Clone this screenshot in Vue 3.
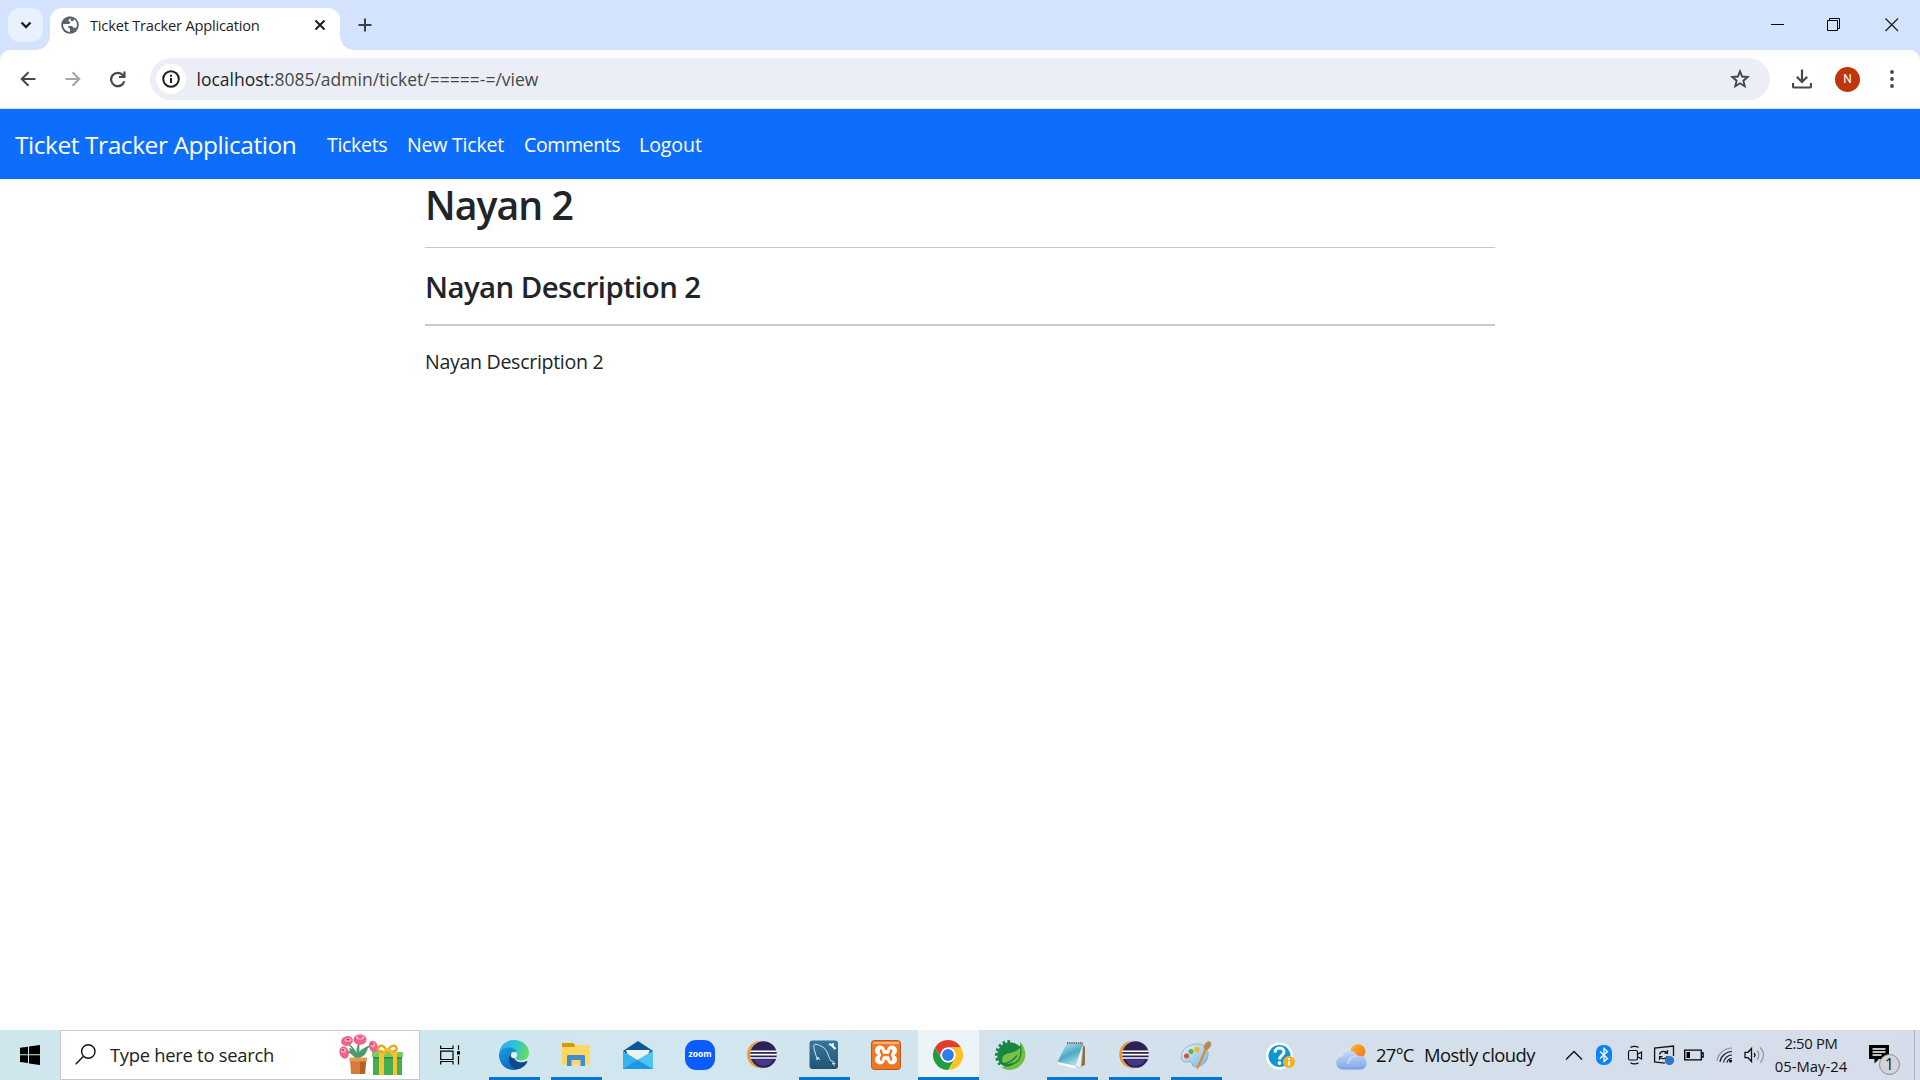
<script setup>
const navLinks = [
  { label: 'Tickets', cls: 'n1' },
  { label: 'New Ticket', cls: 'n2' },
  { label: 'Comments', cls: 'n3' },
  { label: 'Logout', cls: 'n4' },
]
</script>

<template>
  <div class="screen">
    <div class="chrome">
      <header class="tabstrip">
        <div class="tab-search">
          <svg width="12" height="8" viewBox="0 0 12 8"><path d="M1.500 1.500 6 6l4.500-4.500" fill="none" stroke="#1f1f1f" stroke-width="2.400" /></svg>
        </div>
        <div class="tab">
          <svg width="18" height="18" viewBox="0 0 18 18">
            <circle cx="9" cy="9" r="8.800" fill="#5f6368" />
            <path d="M9.800 2.200c-1 .7-2.300 1-2.300 2.400 0 .9.9 1.200 1.800 1.200 0 1.700-.6 2-2 2.200H2.200c-.4 3 1 5.200 2.800 6.400 1.200.9 2.700 1.400 4 1.400v-2.500c0-1-.8-1.400-1.600-1.500V10h3.500c.8 0 .8 1.700 2 1.700h2.500C16.600 8 15.800 5 13 3.300c-.2 1.400-.9 1.900-2 2C9.900 5.400 9.200 4 9.800 2.200Z" fill="#fff" />
          </svg>
          <span class="tab-title">Ticket Tracker Application</span>
          <svg width="12" height="12" viewBox="0 0 12 12"><path d="m1.500 1.500 9 9m0-9-9 9" stroke="#1f1f1f" stroke-width="2" /></svg>
        </div>
        <svg class="plus" width="14" height="14" viewBox="0 0 14 14"><path d="M7 .5v13M.5 7h13" stroke="#3c4043" stroke-width="2" /></svg>
        <div class="win-controls">
          <svg width="14" height="14" viewBox="0 0 14 14"><path d="M0 6.500h13" stroke="#000" /></svg>
          <svg width="14" height="14" viewBox="0 0 14 14"><path d="M.5 2.500h10v10h-10zM2.500 2.500v-2h10v10h-2" fill="none" stroke="#000" /></svg>
          <svg class="win-close" width="14" height="14" viewBox="0 0 14 14"><path d="m.5.5 12.500 12.500m0-12.500L.5 13" stroke="#1a1a1a" stroke-width="1.200" /></svg>
        </div>
      </header>

      <div class="toolbar">
        <svg class="nav-ico" width="16" height="16" viewBox="0 0 16 16"><path d="M15.500 8H2M8.500 1.200 1.700 8l6.800 6.800" fill="none" stroke="#474747" stroke-width="2" /></svg>
        <svg class="nav-ico" width="16" height="16" viewBox="0 0 16 16"><path d="M.5 8H14M7.500 1.200 14.300 8l-6.800 6.800" fill="none" stroke="#a6a6a6" stroke-width="2" /></svg>
        <svg class="nav-ico reload" width="16" height="17" viewBox="0 0 16 17"><path d="M14.300 10.300A6.700 6.700 0 1 1 13 4.200L14.500 6" fill="none" stroke="#474747" stroke-width="2.200" /><path d="M15.500.5V7H9V4.900h4.400V.5z" fill="#474747" /></svg>
        <div class="omnibox">
          <div class="site-info">
            <svg width="18" height="18" viewBox="0 0 18 18"><circle cx="9" cy="9" r="7.800" fill="none" stroke="#1f1f1f" stroke-width="2" /><path d="M9 8v5M9 4.700v2" stroke="#1f1f1f" stroke-width="2" /></svg>
          </div>
          <span class="url"><b>localhost</b>:8085/admin/ticket/=====-=/view</span>
          <svg class="star" width="20" height="20" viewBox="0 0 20 20"><path d="m10 2.400 2.100 5.100 5.600.5-4.300 3.700 1.300 5.500L10 14.300l-4.700 2.900 1.300-5.500L2.300 8l5.600-.5z" fill="none" stroke="#474747" stroke-width="1.900" /></svg>
        </div>
        <svg class="dl" width="20" height="20" viewBox="0 0 20 20"><path d="M10 .5v12M4.800 7.800 10 13l5.200-5.200M1 14v3.300c0 .8.500 1.200 1.200 1.200h15.600c.7 0 1.200-.4 1.200-1.200V14" fill="none" stroke="#474747" stroke-width="2.200" /></svg>
        <div class="avatar">N</div>
        <svg class="dots" width="4" height="18" viewBox="0 0 4 18"><g fill="#474747"><circle cx="2" cy="2" r="1.900" /><circle cx="2" cy="9" r="1.900" /><circle cx="2" cy="16" r="1.900" /></g></svg>
      </div>
    </div>

    <nav class="navbar">
      <a class="brand">Ticket Tracker Application</a>
      <a v-for="l in navLinks" :key="l.label" class="link" :class="l.cls">{{ l.label }}</a>
    </nav>

    <main class="content">
      <h1>Nayan 2</h1>
      <hr class="thin" />
      <h3>Nayan Description 2</h3>
      <hr class="thick" />
      <p>Nayan Description 2</p>
    </main>

    <footer class="taskbar">
      <div class="start">
        <svg width="20" height="20" viewBox="0 0 20 20"><path d="M0 2.800 8 1.700v7.600H0zM9 1.500 20 0v9.300H9zM0 10.300h8v7.800l-8-1.100zM9 10.300h11V20L9 18.400z" /></svg>
      </div>
      <div class="search">
        <svg class="lens" width="21" height="21" viewBox="0 0 21 21"><circle cx="13.300" cy="7.500" r="6.700" fill="none" stroke="#111" stroke-width="1.400" /><path d="M8.500 12.300.7 20.200" stroke="#111" stroke-width="1.400" /></svg>
        <span class="search-text">Type here to search</span>
        <svg class="gift" width="65" height="42" viewBox="0 0 65 42">
          <g fill="none" stroke="#3f8f58" stroke-width="1.400"><path d="M19 24C17 16 12 12 8 9M19 24c0-8 1-13 1-18M20 24c3-8 6-10 11-12M17 24c-4-6-7-7-11-7" /></g>
          <path d="M19 24c-6-1-8-6-9-10 6 1 9 5 9 10Zm0 0c0-7 4-10 10-11-1 6-4 10-10 11ZM19 23c-2-4-2-8 0-13 2 5 2 9 0 13Z" fill="#4a9c6c" />
          <g fill="#f0618c"><ellipse cx="8" cy="7" rx="6" ry="4.800" transform="rotate(-18 8 7)" /><ellipse cx="21" cy="5.500" rx="6.500" ry="5.300" /><ellipse cx="34.500" cy="13" rx="4.300" ry="6.300" transform="rotate(-20 34 13)" /><ellipse cx="5" cy="18.500" rx="4.600" ry="6.300" transform="rotate(-15 5 18)" /></g>
          <g fill="#f9a6bd"><ellipse cx="9" cy="6" rx="3.500" ry="2" /><ellipse cx="21" cy="3.600" rx="4.200" ry="2" /><ellipse cx="34" cy="11" rx="2.300" ry="2.500" /><ellipse cx="4.500" cy="16.500" rx="2.500" ry="2.500" /></g>
          <g fill="#b92d5e"><ellipse cx="9" cy="5.600" rx="1.700" ry=".8" /><ellipse cx="21" cy="3" rx="2" ry=".8" /><circle cx="33" cy="10" r="1" /><circle cx="4" cy="16" r="1" /></g>
          <path d="M11 26h16l-1 14H12z" fill="#d67b3b" /><path d="M10.500 23.500h17.500v4H10.500z" fill="#e39a58" /><path d="M21 27.500h6L26 40h-5z" fill="#b85f25" />
          <path d="M34 21h29v20H34z" fill="#48ad50" /><path d="M33 18h31v5H33z" fill="#76cf5d" /><path d="M34 23h29v1.500H34z" fill="#2d8840" />
          <path d="M40 18h5v23h-5zM54 18h4v23h-4z" fill="#f6c52f" />
          <path d="M48 18c-9 0-12-2-7-6 3-1 6 2 7 6Zm0 0c9 0 12-2 8-6-3-1-7 2-8 6Z" fill="none" stroke="#eaa51c" stroke-width="2.400" /><path d="M46 16h5l5 8M47 16l-5 8" fill="none" stroke="#f5bf2b" stroke-width="2.400" />
        </svg>
      </div>
      <div class="taskview">
        <svg width="20" height="20" viewBox="0 0 20 20"><path d="M.7.500v3h12.300v-3M.7 19.500v-3h12.300v3M.7 6.200h12.300v8.300H.7z" fill="none" stroke="#000" stroke-width="1.200" /><path d="M18.500.3v4.500M18.500 11v8.500" stroke="#000" stroke-width="1.200" /><path d="M17 6.200h3v3.300h-3z" /></svg>
      </div>

      <!-- Edge -->
      <div class="app open">
        <svg width="32" height="32" viewBox="0 0 32 32">
          <defs>
            <linearGradient id="edgeA" x1="0" y1=".3" x2="1" y2=".5"><stop stop-color="#2aaef0" /><stop offset=".55" stop-color="#2dc5ce" /><stop offset="1" stop-color="#6ade54" /></linearGradient>
            <linearGradient id="edgeB" x1="0" y1="0" x2=".6" y2="1"><stop stop-color="#1b9de0" /><stop offset="1" stop-color="#0a68c8" /></linearGradient>
          </defs>
          <path d="M1 15C2 6 8 1 16 1s15 5.500 15 12.500c0 5-3.500 8-8 8-4 0-5.500-1.500-5.500-2.500 0-1 1.400-1.700 1.400-4.500 0-3-3-5.500-7.500-5.500C6.500 9 2.500 11 1 15Z" fill="url(#edgeA)" />
          <path d="M1 15c1.500-4.500 5-6.500 9.500-6.500 4.500 0 7.800 2 8.300 5-4-2-7.500.5-7.500 5.500 0 6.500 6 9.500 10 10-1.500 1.300-3.500 2-5.500 2C7 31 .500 24 1 15Z" fill="url(#edgeB)" />
          <path d="M13 14.500c-4.500 5-1.500 12 3 15 2 1.200 4.500 1 6.500 0 3-1.400 5.500-3.600 6.800-6.500.3-.8-.3-1.100-1-.7-4 2-9 1-11-1.800-1.500-2-2-4.500-.3-6.500-1.300-.5-3-.5-4 .5Z" fill="#114a8b" />
          <path d="M17.400 14c-1.700 2-1.600 4.300-.3 6.300.8 1.300 2 2 3.400 2.400l1-1.300c-2.800-.3-4-1.500-4-2.400 0-1 1.400-1.700 1.400-4.500z" fill="#e4f1f5" /><circle cx="15.800" cy="16.300" r="2.900" fill="#e4f1f5" />
        </svg>
      </div>
      <!-- File Explorer -->
      <div class="app open">
        <svg width="32" height="32" viewBox="0 0 32 32"><path d="M2 4h11l2 2v4H2z" fill="#d99a00" /><path d="M2 8h12l2-2h13.500v20H2z" fill="#ffd65f" /><path d="M7 27V17.500c0-1 .5-1.500 1.500-1.500h15c1 0 1.500.5 1.500 1.500V27h-4.500v-6h-9v6z" fill="#3c8fd1" /></svg>
      </div>
      <!-- Mail -->
      <div class="app">
        <svg width="32" height="32" viewBox="0 0 32 32"><path d="M1 12 16 2l15 10v5H1z" fill="#0a5797" /><path d="M4 11h24l-3 7-9 5-10-6z" fill="#f2f1ef" /><path d="M1 12v18h30V12L15.500 21z" fill="#35b3ee" /><path d="M1 30h30L15.500 21z" fill="#1f98df" /><path d="m15.500 21 15.500 9V12z" fill="#4cc5f4" /></svg>
      </div>
      <!-- Zoom -->
      <div class="app">
        <div class="zoom-ico">zoom</div>
      </div>
      <!-- Eclipse -->
      <div class="app">
        <svg width="32" height="32" viewBox="0 0 32 32"><circle cx="15" cy="15.500" r="13.800" fill="#f7941e" /><circle cx="18" cy="15.500" r="14" fill="#d4e5ed" /><circle cx="17.500" cy="15.500" r="13.300" fill="#2c2255" /><path d="M8 20.500h19a10 9 0 0 1-19 0z" fill="#473788" /><path d="M4.300 12.200h26.400M4.100 15.600h26.800M4.300 19h26.400" stroke="#fff" stroke-width="1.600" /></svg>
      </div>
      <!-- MySQL Workbench -->
      <div class="app open">
        <svg width="32" height="32" viewBox="0 0 32 32"><defs><linearGradient id="sql" x1="0" y1="0" x2="0" y2="1"><stop stop-color="#39779f" /><stop offset="1" stop-color="#215473" /></linearGradient></defs><rect x="1.500" y="1.500" width="28.500" height="28.500" rx="3" fill="url(#sql)" /><path d="M9 21c0-3-1.500-5-2-8C6 10 5 6.500 6.500 5.500c2-.8 3.500.5 5 1 4 1 6.500 4 8 7.500 1.300 3 2 5.500 3 7.500 2 .5 3.500 1.500 4.500 3l-3-.3 3 2.500M9 21l1-3 1.500 3" fill="none" stroke="#d8e8f1" stroke-width="1" /><path d="m27.500 10-4-4M21.500 4.500c1 2 3 2 4 0" stroke="#fff" stroke-width="2.200" fill="none" /></svg>
      </div>
      <!-- XAMPP -->
      <div class="app">
        <svg width="32" height="32" viewBox="0 0 32 32"><rect x="1.500" y="1.500" width="29" height="29" rx="3" fill="#f37623" stroke="#b95a1b" /><path d="M3 3h26v2H3z" fill="#f9b17b" /><g fill="#fff"><circle cx="10" cy="11.500" r="5" /><circle cx="22" cy="11.500" r="5" /><circle cx="10" cy="20.500" r="5" /><circle cx="22" cy="20.500" r="5" /><path d="M8 11h16v10H8z" /></g><path d="M11 10.500v2.300l1.500 3.200-1.500 3.200v2.300M21 10.500v2.300L19.500 16l1.500 3.200v2.300M12 16h8" fill="none" stroke="#f37623" stroke-width="2.400" /></svg>
      </div>
      <!-- Chrome -->
      <div class="app open active">
        <svg width="32" height="32" viewBox="0 0 32 32"><path d="M3 8.500a15 15 0 0 1 26 0H16a7.500 7.500 0 0 0-6.500 11.250z" fill="#e33b2e" /><path d="M29 8.500A15 15 0 0 1 16 31l6.500-11.250A7.500 7.500 0 0 0 16 8.500z" fill="#fcc31e" /><path d="M16 31A15 15 0 0 1 3 8.500l6.500 11.250a7.500 7.500 0 0 0 13 0z" fill="#249a41" /><circle cx="16" cy="16" r="7.500" fill="#fff" /><circle cx="16" cy="16" r="5.900" fill="#2f7cf0" /></svg>
      </div>
      <!-- Spring Tools -->
      <div class="app">
        <svg width="32" height="32" viewBox="0 0 32 32"><path d="M16 2.300a13.700 13.700 0 0 0-9.700 23.400" fill="none" stroke="#178640" stroke-width="2.800" stroke-dasharray="2.600 2.300" /><circle cx="16" cy="16" r="12.800" fill="#178640" /><path d="M25.500 2.500c8 7 7.500 19 .5 24.500-6 5-14 5-19 1 12 1 24-6 18.500-25.500Z" fill="#72be44" /><path d="M26.500 7c2 13-3 17-9 18-4 .7-7.500 0-9.500-1.500C6 16 11 14 17 13c5-.7 7-2 9.500-6Z" fill="#79c143" stroke="#178640" stroke-width="1.300" /><path d="M8 25c6-.5 11-3 15-8.500" fill="none" stroke="#178640" stroke-width="1.400" /></svg>
      </div>
      <!-- Notepad -->
      <div class="app open">
        <svg width="32" height="32" viewBox="0 0 32 32"><defs><linearGradient id="note" x1=".2" y1="0" x2=".7" y2="1"><stop stop-color="#b5e2ed" /><stop offset=".5" stop-color="#4daac4" /><stop offset="1" stop-color="#bce5ec" /></linearGradient></defs><path d="m26 5 3 3v18l-5 2z" fill="#8b724b" /><path d="m25 5 2 2-2 22-6-2z" fill="#eee" stroke="#aaa" stroke-width=".5" /><path d="m1.500 23 9.500-19 16 .5L19.500 27z" fill="url(#note)" /><path d="m1.500 23 18 4 .5 2.500-18-4.500z" fill="#fff" /><path d="M11 4h16" stroke="#666" stroke-width="2" stroke-dasharray="1.200 1" /></svg>
      </div>
      <!-- Eclipse -->
      <div class="app open">
        <svg width="32" height="32" viewBox="0 0 32 32"><circle cx="15" cy="15.500" r="13.800" fill="#f7941e" /><circle cx="18" cy="15.500" r="14" fill="#d4e1ec" /><circle cx="17.500" cy="15.500" r="13.300" fill="#2c2255" /><path d="M8 20.500h19a10 9 0 0 1-19 0z" fill="#473788" /><path d="M4.300 12.200h26.400M4.100 15.600h26.800M4.300 19h26.400" stroke="#fff" stroke-width="1.600" /></svg>
      </div>
      <!-- Paint -->
      <div class="app open">
        <svg width="32" height="32" viewBox="0 0 32 32"><defs><linearGradient id="pal" x1="0" y1="0" x2="1" y2="1"><stop stop-color="#eaf5fb" /><stop offset="1" stop-color="#72b4d9" /></linearGradient></defs><path d="M16 5c8-1 13 5 12 12-1 7-7 11-13 11-3 0-2-3-3.500-4.500-2-2-4 0-6.500-.5-4-.7-4.500-5-3-9C4 9 9 6 16 5Z" fill="url(#pal)" stroke="#78a9c8" stroke-width=".8" /><circle cx="6.500" cy="17" r="2.500" fill="#df4b40" /><circle cx="11" cy="12.500" r="2.500" fill="#57b747" /><circle cx="17" cy="10.500" r="2.700" fill="#f5b52c" /><path d="m25 9 2 1-8.500 19.500-2 1 .5-2.500z" fill="#e7832c" /><path d="M24 10c-.5-3 0-6 5-8l2.500 2c-.5 4-2 6-5 7z" fill="#b78a59" /></svg>
      </div>

      <div class="help">
        <svg width="30" height="30" viewBox="0 0 30 30"><circle cx="13.500" cy="14" r="13.500" fill="#fff" /><circle cx="13.500" cy="14" r="11" fill="#0d96d2" /><path d="M9 10.500c0-6 9-6 9-.5 0 3.500-4.500 3.500-4.500 7.500" fill="none" stroke="#fff" stroke-width="3" /><circle cx="13.500" cy="21" r="1.900" fill="#fff" /><circle cx="23" cy="20" r="6" fill="#f5b120" /><path d="M23 19v4.500M23 16v2" stroke="#fff" stroke-width="2" /></svg>
      </div>
      <div class="weather">
        <svg width="31" height="26" viewBox="0 0 31 26"><defs><linearGradient id="cloud" x1="0" y1="0" x2="0" y2="1"><stop stop-color="#c5d8f8" /><stop offset="1" stop-color="#83a8ea" /></linearGradient><linearGradient id="sun" x1="0" y1="0" x2="1" y2="1"><stop stop-color="#fab928" /><stop offset="1" stop-color="#f36f1c" /></linearGradient></defs><circle cx="22" cy="7.500" r="7.300" fill="url(#sun)" /><path d="M7 25.500a6.500 6.500 0 0 1-.6-13A8 8 0 0 1 21.500 12c5-1.500 9 2 9 7 0 4-2.500 6.500-5.500 6.500z" fill="url(#cloud)" /><path d="M1.500 21c2 3 24 3 28 0-1 3-2.500 4.500-5 4.500H7c-3 0-5-2-5.500-4.500Z" fill="#7c9feb" opacity=".5" /><path d="M12 20c0-5 4-8 9.500-8" fill="none" stroke="#e4edfc" stroke-width="1.500" opacity=".6" /></svg>
        <span class="temp">27°C</span>
        <span class="cond">Mostly cloudy</span>
      </div>

      <div class="tray">
        <span><svg width="18" height="12" viewBox="0 0 18 12"><path d="m1 10.500 8-8 8 8" fill="none" stroke="#111" stroke-width="1.400" /></svg></span>
        <span><svg width="16" height="20" viewBox="0 0 16 20"><rect width="16" height="20" rx="7" fill="#0a84f5" /><path d="m4 6.500 7.500 7L8 16.500v-13l3.500 3L4 13.500" fill="none" stroke="#fff" stroke-width="1.300" /></svg></span>
        <span class="meet"><svg width="16" height="20" viewBox="0 0 16 20"><g fill="none" stroke="#111" stroke-width="1.200"><rect x="1.500" y="5.500" width="9" height="9.500" rx="1.500" /><path d="m11 9 3.500-2v7L11 12M3.500 2.500c2-1.500 6-1.500 8 0M3.500 17.800c2 1.500 6 1.500 8 0" /></g></svg></span>
        <span><svg width="22" height="20" viewBox="0 0 22 20"><path d="M12 18.200 1 16.800M1.600 16.800V3.200L20.500 1v10" fill="none" stroke="#111" stroke-width="1.300" /><path d="M6.500 9.500c1-4 6.500-4 8-1M14.500 5v3.200h-3M14.500 11c-1.500 3.500-6.500 3.500-8 .5M6.500 15v-3.500h3" fill="none" stroke="#111" stroke-width="1.200" /><circle cx="16.500" cy="15.500" r="4.600" fill="#2e76c2" /></svg></span>
        <span><svg width="20" height="12" viewBox="0 0 20 12"><path d="M.7 1.200h16.600v9.600H.7zM17.500 4h1.700v4h-1.700" fill="none" stroke="#000" stroke-width="1.300" /><path d="M2.500 3h3.500v6H2.500z" /></svg></span>
        <span><svg width="17" height="16" viewBox="0 0 17 16"><g fill="none" stroke-width="1.200"><path d="M1 14C2 7 8 1 16 1" stroke="#88909a" /><path d="M4 15C4.500 9.500 10 4.500 16 4.500M7.500 15.500c.5-4 4.500-7.500 8.500-7.500M11 15.500c.5-2 2.500-4 5-4" stroke="#222" /></g><circle cx="14.500" cy="14" r="1.500" /></svg></span>
        <span><svg width="21" height="18" viewBox="0 0 21 18"><path d="M1 6.300h3L7.500 2.500v13L4 11.700H1z" fill="none" stroke="#111" stroke-width="1.300" /><path d="M10 7c1.200 1.200 1.200 2.800 0 4" fill="none" stroke="#111" stroke-width="1.200" /><path d="M13 4.500c2.500 2.500 2.500 6.500 0 9M16 1.500c4.500 4 4.500 11 0 15" fill="none" stroke="#8d949f" stroke-width="1.200" /></svg></span>
      </div>
      <div class="clock">
        <div class="time">2:50 PM</div>
        <div class="date">05-May-24</div>
      </div>
      <div class="notif">
        <svg width="21" height="20" viewBox="0 0 21 20"><path d="M0 0h20v14H10l-4.500 4.500V14H0z" /><path d="M3.500 4h13M3.500 7h13M3.500 10h9" stroke="#fff" stroke-width="1.300" /></svg>
        <span class="badge">1</span>
      </div>
    </footer>
  </div>
</template>

<style>
body { background: #fff; overflow: hidden; }
</style>

<style scoped>
* { box-sizing: border-box; }
.screen { width: 1920px; height: 1080px; display: flex; flex-direction: column; font-family: "Open Sans", "Noto Sans", sans-serif; color: #212529; overflow: hidden; white-space: nowrap; }
svg { display: block; flex: none; }

.chrome { flex: none; background: #d3e2fd; }
.tabstrip { height: 50px; display: flex; align-items: flex-start; }
.tab-search { margin: 8px 0 0 8px; width: 35px; height: 34px; border-radius: 12px; background: #e9f0fe; display: flex; align-items: center; justify-content: center; }
.tab { position: relative; margin: 8px 0 0 7px; width: 290px; height: 42px; background: #fff; border-radius: 12px 12px 0 0; display: flex; align-items: center; padding: 0 14px 8px 11px; }
.tab::before, .tab::after { content: ""; position: absolute; bottom: 0; width: 14px; height: 14px; }
.tab::before { left: -14px; background: radial-gradient(circle at 0 0, transparent 13.5px, #fff 14px); }
.tab::after { right: -14px; background: radial-gradient(circle at 100% 0, transparent 13.5px, #fff 14px); }
.tab-title { margin-left: 11px; flex: 1; font-size: 14.7px; letter-spacing: -0.23px; color: #1f1f1f; }
.plus { margin: 18px 0 0 18px; }
.win-controls { margin: 18px 21px 0 auto; display: flex; gap: 42px; }
.win-close { margin-left: 2px; }

.toolbar { height: 59px; background: #fff; border-radius: 10px 10px 0 0; border-bottom: 1px solid #e1e1e1; display: flex; align-items: center; padding-left: 20px; }
.nav-ico { margin-right: 29px; }
.omnibox { margin-left: -5px; width: 1620px; height: 42px; border-radius: 21px; background: #ebeef7; display: flex; align-items: center; padding-left: 6px; }
.site-info { width: 30px; height: 30px; border-radius: 50%; background: #fff; display: flex; align-items: center; justify-content: center; }
.url { margin-left: 10.5px; flex: 1; font-size: 17.5px; color: #474747; }
.url b { font-weight: 400; color: #1f1f1f; }
.star { margin-right: 20px; }
.dl { margin-left: 22px; }
.avatar { margin-left: 23px; width: 25px; height: 25px; border-radius: 50%; background: #bf360c; color: #fff; font: 12px Roboto, sans-serif; display: flex; align-items: center; justify-content: center; }
.dots { margin-left: 30px; }

.navbar { flex: none; height: 70px; background: #0d6efd; color: #fff; display: flex; align-items: center; padding-left: 15px; }
.brand { width: 312px; font-size: 24.5px; letter-spacing: -0.44px; padding-top: 1px; }
.link { font-size: 19.6px; padding-top: 1px; }
.n1 { width: 80px; letter-spacing: -0.35px; }
.n2 { width: 117px; letter-spacing: -0.25px; }
.n3 { width: 115px; letter-spacing: -0.45px; }
.n4 { letter-spacing: -0.1px; }

.content { flex: 1; width: 1070px; margin: 0 auto; }
h1 { margin: 0; height: 68px; font-size: 39.2px; line-height: 51px; font-weight: 600; letter-spacing: -0.95px; }
hr { margin: 0; border: 0; background: #c8c9ca; }
.thin { height: 1px; }
h3 { margin: 0; height: 76px; font-size: 29.4px; line-height: 78px; font-weight: 600; letter-spacing: -0.58px; }
.thick { height: 2px; }
p { margin: 0; font-size: 19.6px; line-height: 71px; letter-spacing: -0.32px; }

.taskbar { flex: none; height: 50px; display: flex; background: linear-gradient(90deg, #cfe6ed 0%, #d1e6ee 38%, #d3e1ec 60%, #d4dfeb 80%, #d7dcea 100%); color: #111; }
.start, .help { display: flex; align-items: center; justify-content: center; }
.start { width: 60px; }
.search { width: 360px; background: #fff; border: 1px solid #c5c9cb; display: flex; align-items: center; padding-left: 14px; }
.lens { margin-bottom: 1px; }
.search-text { margin: -2px 0 0 14px; width: 229px; font-size: 18.4px; letter-spacing: -0.28px; color: #222; }
.gift { margin-top: -1px; }
.taskview { width: 63px; padding: 15px 0 0 20px; }
.app { width: 62px; display: flex; align-items: center; justify-content: center; position: relative; }
.open::after { content: ""; position: absolute; left: 6px; bottom: 0; width: 51px; height: 3px; background: #0078d7; }
.active { background: linear-gradient(#ecf4f7, #ecf4f7) 1px 0 no-repeat; }
.active::after { left: 1px; width: 61px; }
.zoom-ico { width: 30px; height: 30px; border-radius: 11px; background: #0b5cff; color: #fff; font: 700 8.5px/27px "Open Sans", sans-serif; text-align: center; }
.help { width: 108px; padding: 4px 1px 0 0; }
.weather { width: 224px; display: flex; align-items: center; padding-left: 1px; font-size: 18.4px; }
.weather svg { margin-top: 3px; }
.temp { margin: -1px 0 0 9px; width: 48px; letter-spacing: -0.68px; }
.cond { margin-top: -1px; letter-spacing: -0.53px; }
.tray { display: flex; }
.tray span { width: 30px; display: flex; align-items: center; justify-content: center; }
.tray .meet { padding-left: 2px; }
.clock { width: 84px; text-align: center; font-size: 14.8px; line-height: 23px; padding-top: 2px; }
.time { letter-spacing: -0.3px; }
.notif { width: 62px; border-right: 1px solid #a8b2c0; padding: 15px 0 0 16px; position: relative; }
.badge { position: absolute; left: 26px; top: 24px; width: 21px; height: 21px; border: 1px solid #8a8d91; border-radius: 50%; background: #d2d4d7; font-size: 15.5px; line-height: 19px; text-align: center; }
</style>
